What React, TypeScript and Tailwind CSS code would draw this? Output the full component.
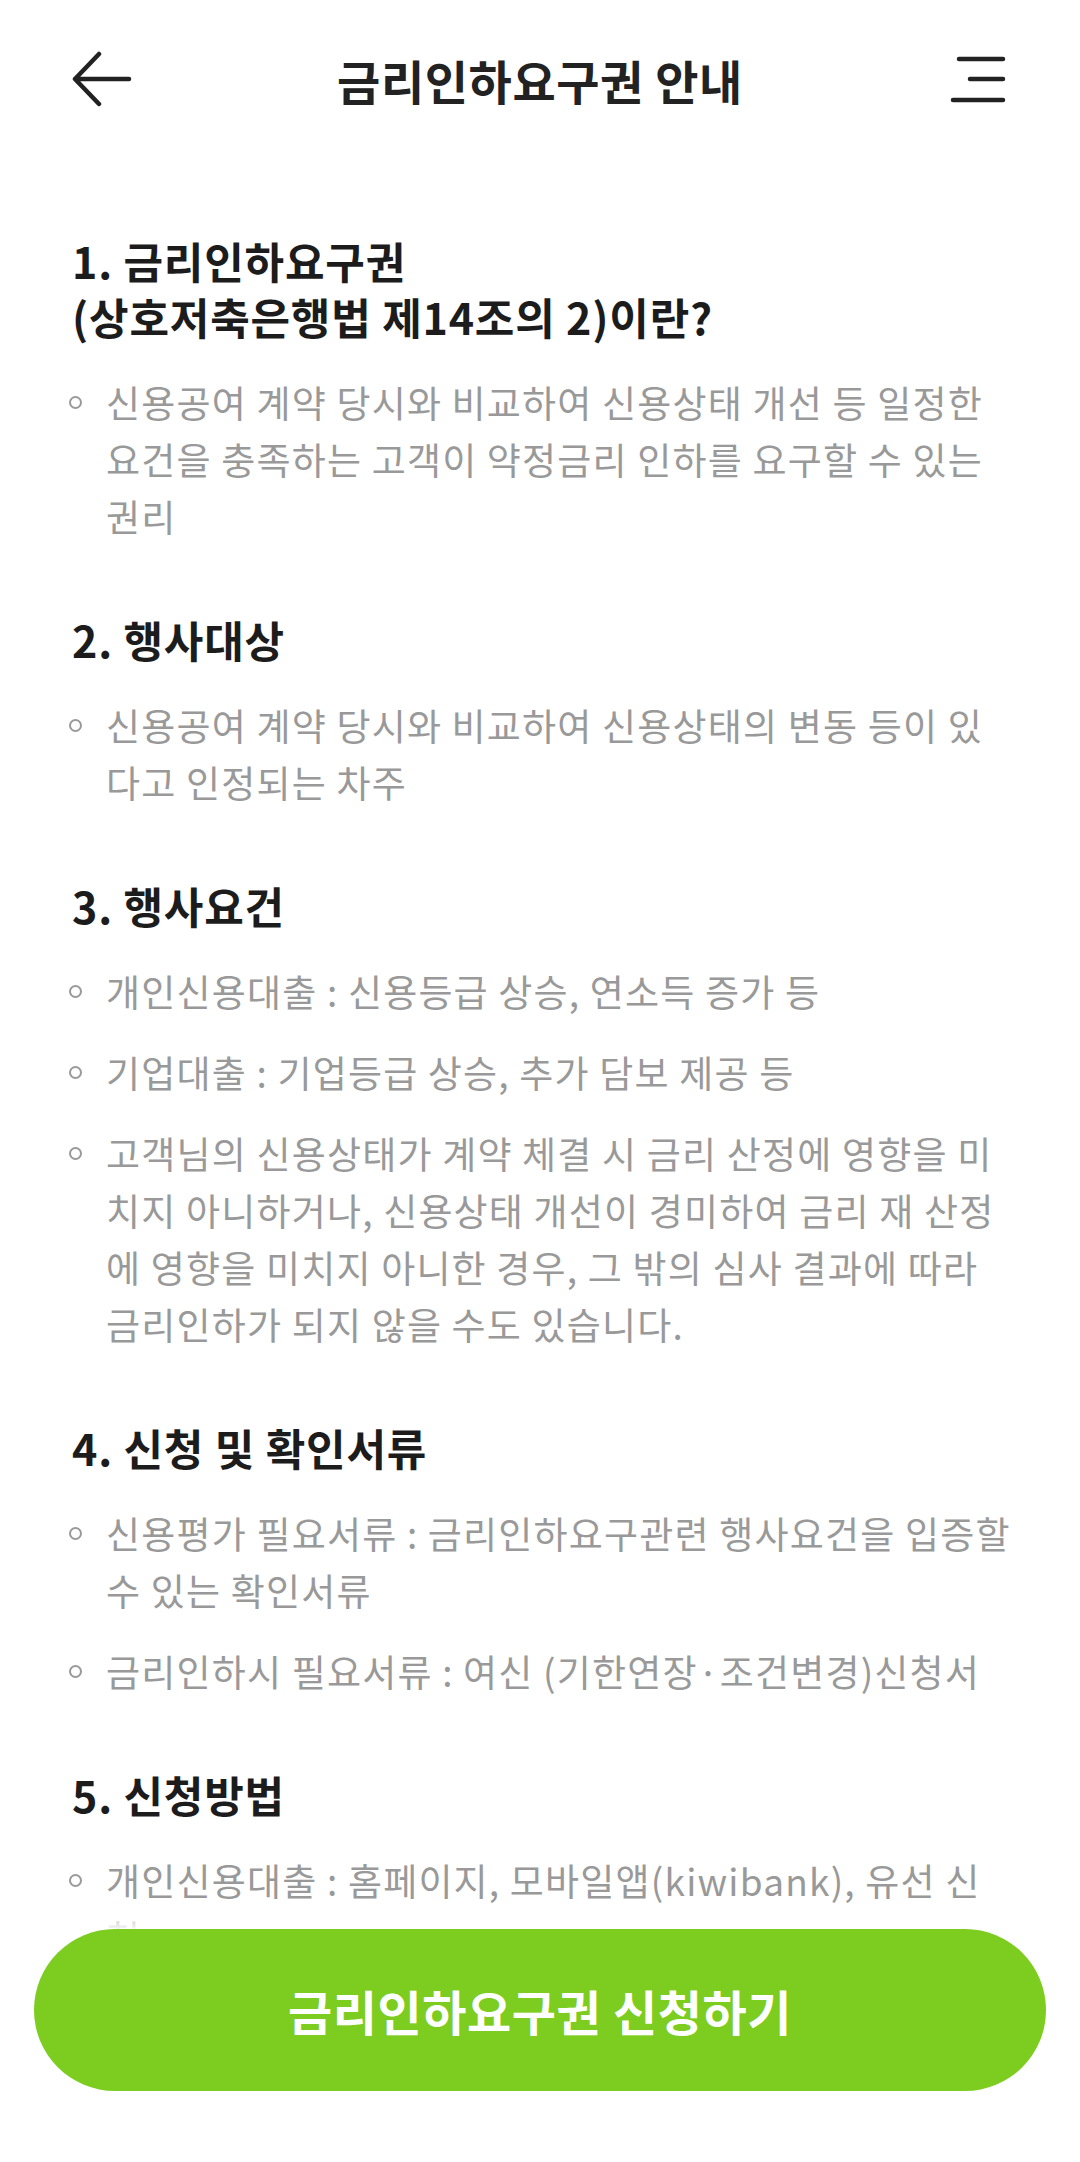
import React from "react";

type Section = {
  title: string[];
  items: string[][];
};

const sections: Section[] = [
  {
    title: ["1. 금리인하요구권", "(상호저축은행법 제14조의 2)이란?"],
    items: [
      [
        "신용공여 계약 당시와 비교하여 신용상태 개선 등 일정한",
        "요건을 충족하는 고객이 약정금리 인하를 요구할 수 있는",
        "권리",
      ],
    ],
  },
  {
    title: ["2. 행사대상"],
    items: [["신용공여 계약 당시와 비교하여 신용상태의 변동 등이 있", "다고 인정되는 차주"]],
  },
  {
    title: ["3. 행사요건"],
    items: [
      ["개인신용대출 : 신용등급 상승, 연소득 증가 등"],
      ["기업대출 : 기업등급 상승, 추가 담보 제공 등"],
      [
        "고객님의 신용상태가 계약 체결 시 금리 산정에 영향을 미",
        "치지 아니하거나, 신용상태 개선이 경미하여 금리 재 산정",
        "에 영향을 미치지 아니한 경우, 그 밖의 심사 결과에 따라",
        "금리인하가 되지 않을 수도 있습니다.",
      ],
    ],
  },
  {
    title: ["4. 신청 및 확인서류"],
    items: [
      ["신용평가 필요서류 : 금리인하요구관련 행사요건을 입증할", "수 있는 확인서류"],
      ["금리인하시 필요서류 : 여신 (기한연장·조건변경)신청서"],
    ],
  },
  {
    title: ["5. 신청방법"],
    items: [["개인신용대출 : 홈페이지, 모바일앱(kiwibank), 유선 신", "청"]],
  },
];

function BackIcon() {
  return (
    <svg width="60" height="56" viewBox="0 0 60 56" fill="none">
      <path
        d="M27 3 L3 28 L27 53 M3 28 H57"
        stroke="#222"
        strokeWidth="4.5"
        strokeLinecap="round"
        strokeLinejoin="round"
      />
    </svg>
  );
}

function MenuIcon() {
  return (
    <svg width="60" height="56" viewBox="0 0 60 56" fill="none">
      <path
        d="M11 8 H55 M22 28 H55 M5 49 H55"
        stroke="#222"
        strokeWidth="4.5"
        strokeLinecap="round"
      />
    </svg>
  );
}

export default function App() {
  return (
    <div
      className="relative h-[2162px] w-full overflow-hidden bg-white"
      style={{ fontFamily: '"Noto Sans CJK KR", "Noto Sans", sans-serif' }}
    >
      <header className="flex h-[158px] items-center justify-between px-[72px]">
        <BackIcon />
        <h1 className="flex-1 text-center text-[47px] font-bold leading-none tracking-[0.6px] text-[#222]">
          금리인하요구권 안내
        </h1>
        <MenuIcon />
      </header>

      <main className="flex flex-col gap-[66px] px-[72px] pt-[74px]">
        {sections.map((s, i) => (
          <section key={i} className="flex flex-col gap-[30px]">
            <h2 className="text-[43px] font-bold leading-[56px] tracking-[0.8px] text-[#1c1c1c]">
              {s.title.map((t, j) => (
                <div key={j} className="whitespace-nowrap">
                  {t}
                </div>
              ))}
            </h2>
            <ul className="flex flex-col gap-[24px]">
              {s.items.map((lines, j) => (
                <li
                  key={j}
                  className="flex text-[37px] leading-[57px] tracking-[1.2px] text-[#999]"
                >
                  <span className="-ml-[3px] flex h-[57px] w-[37px] shrink-0 items-center">
                    <span className="h-[13px] w-[13px] rounded-full border-[2.5px] border-[#999]" />
                  </span>
                  <div>
                    {lines.map((l, k) => (
                      <div key={k} className="whitespace-nowrap">
                        {l}
                      </div>
                    ))}
                  </div>
                </li>
              ))}
            </ul>
          </section>
        ))}
      </main>

      <div className="absolute bottom-0 left-0 right-0">
        <div className="h-[26px] bg-linear-to-b from-white/0 to-white/90" />
        <div className="bg-white px-[34px] pb-[71px]">
          <button className="flex h-[162px] w-full items-center justify-center rounded-full bg-[#7ccd1f] text-[48px] font-bold tracking-[0.6px] text-white">
            금리인하요구권 신청하기
          </button>
        </div>
      </div>
    </div>
  );
}
